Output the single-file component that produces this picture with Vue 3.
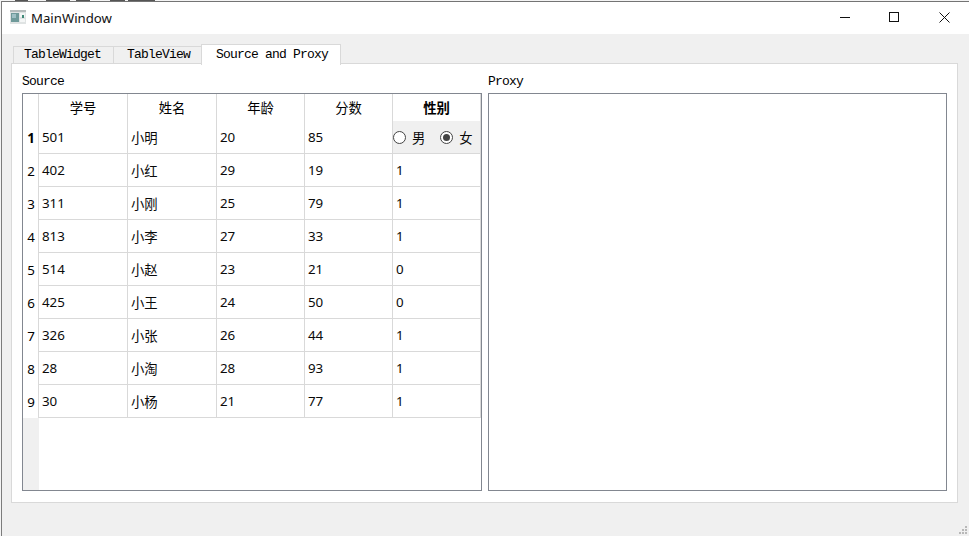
<script setup>
const headers = ['学号', '姓名', '年龄', '分数', '性别']
const rows = [
  ['501', '小明', '20', '85', null],
  ['402', '小红', '29', '19', '1'],
  ['311', '小刚', '25', '79', '1'],
  ['813', '小李', '27', '33', '1'],
  ['514', '小赵', '23', '21', '0'],
  ['425', '小王', '24', '50', '0'],
  ['326', '小张', '26', '44', '1'],
  ['28', '小淘', '28', '93', '1'],
  ['30', '小杨', '21', '77', '1']
]
</script>

<template>
  <div class="screen">
    <svg class="behind" width="969" height="1" viewBox="0 0 969 1">
      <path d="M15 .5h13M46 .5h24M76 .5h14M110 .5h15M128 .5h27" stroke="#555" fill="none" />
    </svg>
    <div class="window">
      <div class="titlebar">
        <svg class="appicon" width="16" height="14" viewBox="0 0 16 14">
          <rect x="0" y="0" width="16" height="14" fill="#dfe3e3" />
          <rect x="0" y="0" width="16" height="2" fill="#b5bcbc" />
          <rect x="1" y="3" width="8" height="9" fill="#6f9a9a" />
          <rect x="2" y="4" width="4" height="4" fill="#9fc0c4" />
          <rect x="10" y="3" width="5" height="4" fill="#f4f6f6" />
          <rect x="12" y="5" width="2" height="3" fill="#3f8a78" />
          <rect x="10" y="9" width="5" height="3" fill="#f4f6f6" />
        </svg>
        <span class="title">MainWindow</span>
        <div class="controls">
          <svg width="11" height="11" viewBox="0 0 11 11"><path d="M0 5.5h10" stroke="#111" fill="none" /></svg>
          <svg width="11" height="11" viewBox="0 0 11 11"><rect x=".5" y=".5" width="9" height="9" stroke="#111" fill="none" /></svg>
          <svg width="11" height="11" viewBox="0 0 11 11"><path d="M.5 .5l10 10M10.5 .5l-10 10" stroke="#111" fill="none" /></svg>
        </div>
      </div>
      <div class="content">
        <div class="tabs">
          <div class="tab first">TableWidget</div>
          <div class="tab second">TableView</div>
          <div class="tab active">Source and Proxy</div>
        </div>
        <div class="pane">
          <div class="panel">
            <div class="label">Source</div>
            <div class="table source">
              <div class="grid">
                <div class="corner"></div>
                <div v-for="(h, i) in headers" :key="h" class="head" :class="{ bold: i === 4 }">{{ h }}</div>
                <template v-for="(r, ri) in rows" :key="ri">
                  <div class="rowhead" :class="{ bold: ri === 0 }">{{ ri + 1 }}</div>
                  <template v-for="(c, ci) in r" :key="ci">
                    <div v-if="c !== null" class="cell">{{ c }}</div>
                    <div v-else class="cell radios">
                      <span class="radio-item"><i class="radio"></i>男</span>
                      <span class="radio-item"><i class="radio checked"></i>女</span>
                    </div>
                  </template>
                </template>
              </div>
              <div class="rest"><div class="rest-head"></div></div>
            </div>
          </div>
          <div class="panel right">
            <div class="label">Proxy</div>
            <div class="table"></div>
          </div>
        </div>
      </div>
      <div class="grip">
        <svg width="10" height="10" viewBox="0 0 10 10" fill="#b8b8b8">
          <rect x="6" y="0" width="2" height="2" /><rect x="3" y="3" width="2" height="2" /><rect x="6" y="3" width="2" height="2" />
          <rect x="0" y="6" width="2" height="2" /><rect x="3" y="6" width="2" height="2" /><rect x="6" y="6" width="2" height="2" />
        </svg>
      </div>
    </div>
  </div>
</template>

<style>
html, body { margin: 0; padding: 0; background: #fff; }
</style>

<style scoped>
.screen {
  position: relative;
  width: 969px;
  height: 536px;
  overflow: hidden;
  background: #f4f4f4;
  padding: 1px 0 0 1px;
  box-sizing: border-box;
}
.behind { position: absolute; left: 0; top: 0; display: block; }
.window {
  position: relative;
  height: 535px;
  box-sizing: border-box;
  background: #f0f0f0;
  border-left: 1px solid #7c7c7c;
  border-top: 1px solid #747474;
  display: flex;
  flex-direction: column;
  font-family: "Noto Sans", "Noto Sans CJK SC", sans-serif;
  color: #000;
}
.titlebar {
  height: 32px;
  flex: none;
  background: #fff;
  display: flex;
  align-items: center;
  padding-left: 8px;
}
.appicon { margin-right: 5px; margin-top: -2px; }
.title { font-size: 13.2px; color: #111; margin-top: -1px; }
.controls {
  margin-left: auto;
  display: flex;
  gap: 38px;
  padding: 0 19px 2px 0;
  align-items: center;
}
.controls svg:last-child { margin-left: 1px; }
.content { flex: 1; padding: 10px 9px 0; display: flex; flex-direction: column; }
.tabs {
  display: flex;
  height: 20px;
  align-items: flex-end;
  padding-left: 2px;
  position: relative;
  z-index: 1;
  font-family: "Liberation Mono", monospace;
  font-size: 13px;
  letter-spacing: -0.8px;
}
.tab {
  box-sizing: border-box;
  height: 18px;
  background: #f0f0f0;
  border: 1px solid #d9d9d9;
  border-right: none;
  display: flex;
  align-items: center;
  justify-content: center;
  padding-bottom: 1px;
}
.tab.first { width: 100px; padding-right: 2px; }
.tab.second { width: 88px; padding-left: 2px; }
.tab.active {
  width: 140px;
  background: #fff;
  border: 1px solid #d9d9d9;
  border-bottom: none;
  margin-bottom: -1px;
  height: 21px;
  padding-left: 2px;
  padding-bottom: 2px;
}
.pane {
  width: 947px;
  height: 440px;
  box-sizing: border-box;
  background: #fff;
  border: 1px solid #d9d9d9;
  display: flex;
  padding: 10px 10px 11px 10px;
  gap: 6px;
  margin-top: -1px;
}
.panel { display: flex; flex-direction: column; width: 460px; flex: none; }
.panel.right { width: 459px; }
.label {
  height: 19px;
  box-sizing: border-box;
  padding-top: 1px;
  font-family: "Liberation Mono", monospace;
  font-size: 13px;
  letter-spacing: -0.8px;
  line-height: 14px;
}
.table {
  flex: 1;
  box-sizing: border-box;
  border: 1px solid #828790;
  background: #fff;
  display: flex;
  flex-direction: column;
  overflow: hidden;
}
.grid {
  display: grid;
  grid-template-columns: 16px 89px 89px 88px 88px 88px;
  grid-template-rows: 27px repeat(9, 33px);
  font-size: 13.33px;
}
.corner, .head { background: #fff; }
.corner { border-right: 1px solid #d9d9d9; }
.head {
  border-right: 1px solid #d9d9d9;
  display: flex;
  align-items: center;
  justify-content: center;
  padding-bottom: 1px;
  box-sizing: border-box;
}
.bold { font-weight: 700; }
.rowhead {
  display: flex;
  align-items: center;
  justify-content: center;
  background: #fff;
  border-right: 1px solid #d9d9d9;
  padding-left: 1px;
  box-sizing: border-box;
}
.cell {
  box-sizing: border-box;
  border-right: 1px solid #d9d9d9;
  border-bottom: 1px solid #d9d9d9;
  display: flex;
  align-items: center;
  padding-left: 3px;
  color: #0a0a0a;
}
.radios {
  background: #f0f0f0;
  padding: 0;
  gap: 15px;
}
.radio-item { display: flex; align-items: center; gap: 6px; }
.radio {
  width: 13px;
  height: 13px;
  box-sizing: border-box;
  border: 1px solid #444;
  border-radius: 50%;
  background: #fff;
  display: flex;
  align-items: center;
  justify-content: center;
}
.radio.checked::after {
  content: "";
  width: 7px;
  height: 7px;
  border-radius: 50%;
  background: #444;
}
.rest { flex: 1; display: flex; }
.rest-head { width: 16px; background: #f0f0f0; }
.grip { position: absolute; right: 0; bottom: 0; width: 10px; height: 10px; line-height: 0; }
</style>
